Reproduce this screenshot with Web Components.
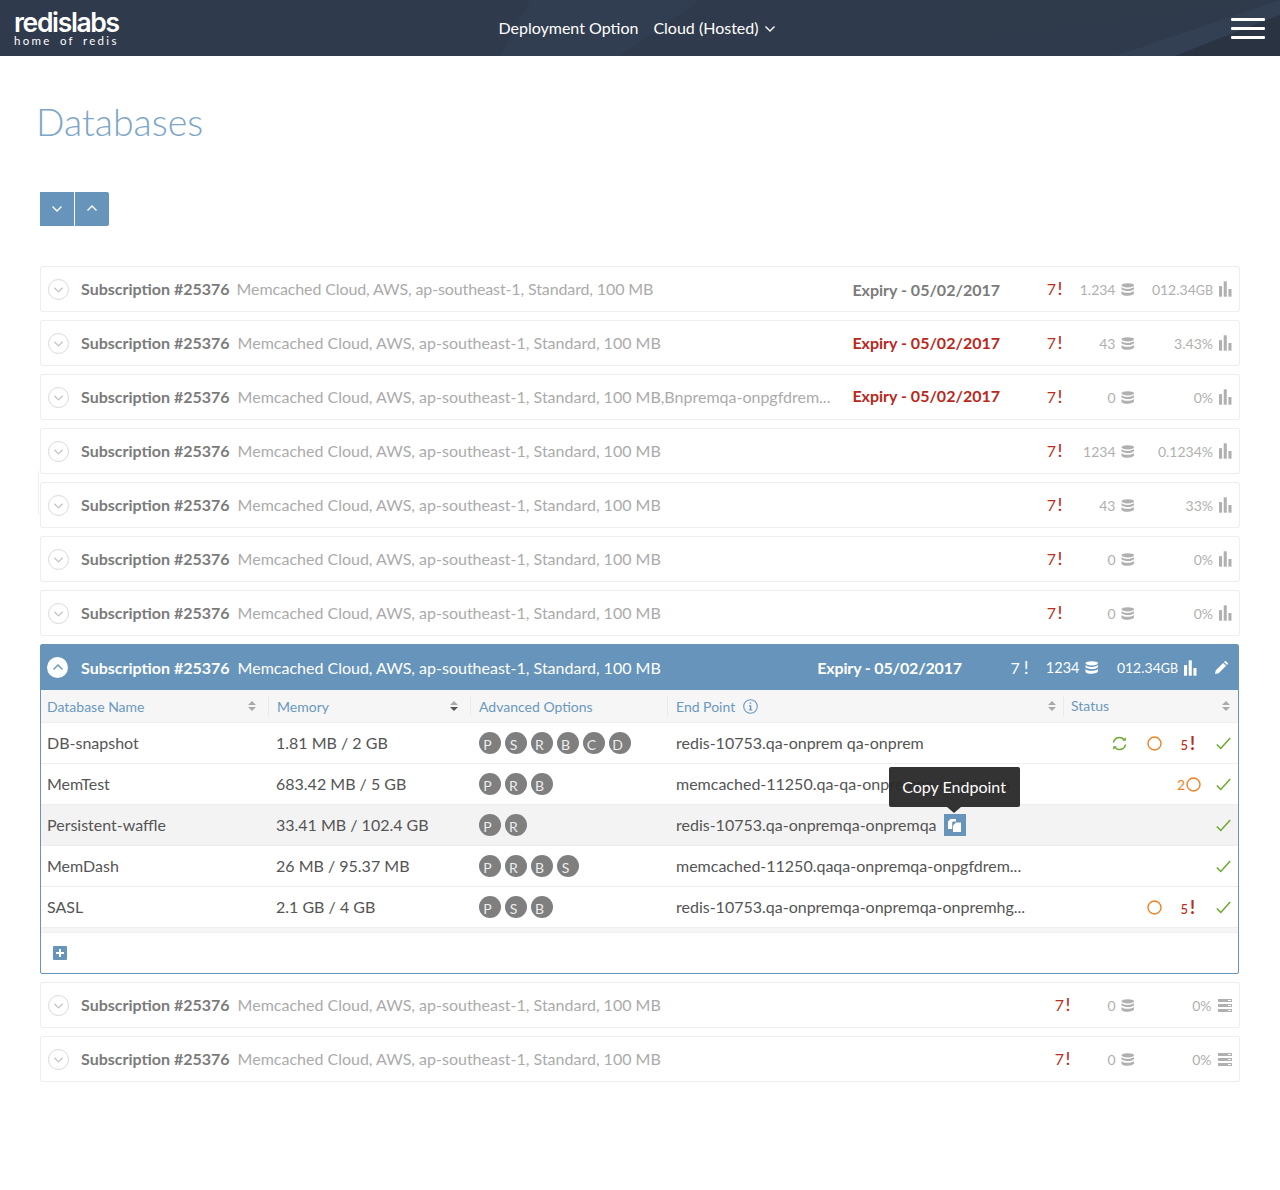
<!DOCTYPE html>
<html>
<head>
<meta charset="utf-8">
<title>Databases</title>
<style>
	html, body { margin: 0; background: #fff; font-family: "Lato", "Liberation Sans", sans-serif; }
	main { display: block; padding: 0 40px; }
	.list { display: flex; flex-direction: column; gap: 8px; }
</style>
</head>
<body>
<rl-header></rl-header>
<main>
	<rl-title>Databases</rl-title>
	<rl-toggle></rl-toggle>
	<div class="list">
		<rl-sub-row tight expiry="Expiry - 05/02/2017" count="1.234" usage="012.34GB"></rl-sub-row>
		<rl-sub-row expiry="Expiry - 05/02/2017" lift="-2" danger count="43" usage="3.43%"></rl-sub-row>
		<rl-sub-row expiry="Expiry - 05/02/2017" lift="-4" danger count="0" usage="0%" desc="Memcached Cloud, AWS, ap-southeast-1, Standard, 100 MB,Bnpremqa-onpgfdrem..."></rl-sub-row>
		<rl-sub-row count="1234" usage="0.1234%"></rl-sub-row>
		<rl-sub-row count="43" usage="33%" stray></rl-sub-row>
		<rl-sub-row count="0" usage="0%"></rl-sub-row>
		<rl-sub-row count="0" usage="0%"></rl-sub-row>
		<rl-sub-panel>
			<rl-db-row name="DB-snapshot" memory="1.81 MB / 2 GB" options="P S R B C D" endpoint="redis-10753.qa-onprem qa-onprem" status="sync circle alert"></rl-db-row>
			<rl-db-row name="MemTest" memory="683.42 MB / 5 GB" options="P R B" endpoint="memcached-11250.qa-qa-onpremqa-onpremqa" status="pending"></rl-db-row>
			<rl-db-row name="Persistent-waffle" memory="33.41 MB / 102.4 GB" options="P R" endpoint="redis-10753.qa-onpremqa-onpremqa" copy></rl-db-row>
			<rl-db-row name="MemDash" memory="26 MB / 95.37 MB" options="P R B S" endpoint="memcached-11250.qaqa-onpremqa-onpgfdrem..."></rl-db-row>
			<rl-db-row name="SASL" memory="2.1 GB / 4 GB" options="P S B" endpoint="redis-10753.qa-onpremqa-onpremqa-onpremhg..." status="circle alert"></rl-db-row>
		</rl-sub-panel>
		<rl-sub-row count="0" usage="0%" server></rl-sub-row>
		<rl-sub-row count="0" usage="0%" server></rl-sub-row>
	</div>
</main>

<script>
const DEFAULT_DESC = "Memcached Cloud, AWS, ap-southeast-1, Standard, 100 MB";

const icons = {
	chevronDown: `<svg width="12" height="8" viewBox="0 0 12 8"><path d="M1.5 1.5 6 6l4.5-4.5" fill="none" stroke="currentColor" stroke-width="1.4"/></svg>`,
	chevronUp: `<svg width="12" height="8" viewBox="0 0 12 8"><path d="M1.5 6.5 6 2l4.5 4.5" fill="none" stroke="currentColor" stroke-width="1.4"/></svg>`,
	db: `<svg width="14" height="13" viewBox="0 0 14 13" fill="currentColor"><ellipse cx="7" cy="2.2" rx="6.5" ry="2.2"/><path d="M.5 4c1 1.300 3.500 1.900 6.500 1.900S12.500 5.300 13.500 4v1.700C13.500 7 10.500 8 7 8S.5 7 .5 5.700zM.5 8c1 1.300 3.500 1.900 6.500 1.900s5.500-.6 6.500-1.900v2.600C13.500 11.900 10.500 13 7 13S.5 11.900.5 10.600z"/></svg>`,
	bars: `<svg width="12.500" height="16" viewBox="0 0 13 16" fill="currentColor"><rect x="0" y="5" width="3.200" height="11"/><rect x="4.900" y="0" width="3.200" height="16"/><rect x="9.800" y="8" width="3.200" height="8"/></svg>`,
	server: `<svg width="14" height="13" viewBox="0 0 14 13" fill="currentColor"><path fill-rule="evenodd" d="M0 0h14v3H0zM10 1v1h3V1zM0 5h14v3H0zM10 6v1h3V6zM0 10h14v3H0zM10 11v1h3v-1z"/></svg>`,
	pencil: `<svg width="13" height="13" viewBox="0 0 13 13" fill="currentColor"><path d="M0 13l.8-3.700L8.200 1.900l2.900 2.900-7.400 7.400zM9 1.100 10 .1c.2-.2.500-.2.700 0l2.200 2.200c.2.200.2.500 0 .7l-1 1z"/></svg>`,
	info: `<svg width="15" height="15" viewBox="0 0 15 15"><circle cx="7.500" cy="7.500" r="6.800" fill="none" stroke="currentColor" stroke-width="1.100"/><path d="M6.700 3.300h1.500v1.500H6.700zM6 6.300h2.300v4.200h1v1H5.800v-1h1V7.300H6z" fill="currentColor"/></svg>`,
	sync: `<svg width="15" height="15" viewBox="0 0 15 15" fill="none" stroke="#6aa82e" stroke-width="1.500"><path d="M1.500 6.500A6 6 0 0 1 12 3.600"/><path d="M13.500 8.500A6 6 0 0 1 3 11.400"/><path d="M13.800 1.200v3.600h-3.600z" fill="#6aa82e" stroke="none"/><path d="M1.200 13.800v-3.600h3.600z" fill="#6aa82e" stroke="none"/></svg>`,
	check: `<svg width="15" height="13" viewBox="0 0 15 13"><path d="M.8 7.500 4.800 11.500 14.200 1" fill="none" stroke="#6aa82e" stroke-width="1.500"/></svg>`,
	circle: `<svg width="15" height="15" viewBox="0 0 15 15"><circle cx="7.500" cy="7.500" r="6.500" fill="none" stroke="#f08124" stroke-width="1.400"/></svg>`,
	copy: `<svg width="13" height="13" viewBox="0 0 13 13" fill="#fff"><path d="M2.500 0H8V2.500H5L4.200 3.300V10H0V2.500z"/><path d="M8 3.500H13V13H5V6.500z"/></svg>`
};

const headerTemplate = document.createElement('template');
headerTemplate.innerHTML = /*html*/`
	<style>
		:host {
			display: grid;
			grid-template-columns: 1fr auto 1fr;
			align-items: center;
			position: relative;
			height: 56px;
			padding: 0 15px 0 14px;
			background-color: #2f3a4c;
			color: #fff;
			overflow: hidden;
		}
		.bg { position: absolute; inset: 0; width: 100%; height: 100%; }
		.logo, nav, .burger { position: relative; }
		.logo { display: flex; flex-direction: column; width: 110px; margin-top: -1px; }
		.brand { font: 600 26.500px/24px "Inter", "Lato", sans-serif; letter-spacing: -1.350px; margin-top: 1px; }
		.tag { font: 400 11.500px/13px "Lato", sans-serif; letter-spacing: 2.300px; word-spacing: 3px; white-space: nowrap; }
		nav { display: flex; align-items: center; font-size: 16px; line-height: 20px; margin-right: 5px; }
		nav span + span { margin-left: 15px; }
		nav svg { margin-left: 5px; margin-top: 2px; }
		.burger { justify-self: end; display: flex; flex-direction: column; gap: 6px; width: 34px; margin-top: 1px; }
		.burger i { display: block; height: 3px; background: #fff; border-radius: 1px; }
	</style>
	<svg class="bg" viewBox="0 0 1280 56" preserveAspectRatio="none">
		<polygon points="530,0 700,0 620,56 500,56" fill="#313d50"/>
		<polygon points="1280,0 1280,15 1175,56 1115,56" fill="#334053"/>
		<polygon points="1280,15 1280,56 1175,56" fill="#2a3341"/>
		<polygon points="960,0 1280,0 960,40" fill="#2f3b4b"/>
	</svg>
	<div class="logo">
		<span class="brand">redislabs</span>
		<span class="tag">home of redis</span>
	</div>
	<nav>
		<span>Deployment Option</span>
		<span>Cloud (Hosted)</span>
		${icons.chevronDown}
	</nav>
	<div class="burger"><i></i><i></i><i></i></div>
`;

class RlHeader extends HTMLElement {
	constructor() {
		super();
		this.attachShadow({mode: 'open'}).append(headerTemplate.content.cloneNode(true));
	}
}

const titleTemplate = document.createElement('template');
titleTemplate.innerHTML = /*html*/`
	<style>
		:host { display: block; margin-left: -4px; padding-top: 42px; height: 94px; }
		h1 { margin: 0; font: 300 37.500px/48px "Lato", sans-serif; color: #7ba5c9; }
	</style>
	<h1><slot></slot></h1>
`;

class RlTitle extends HTMLElement {
	constructor() {
		super();
		this.attachShadow({mode: 'open'}).append(titleTemplate.content.cloneNode(true));
	}
}

const toggleTemplate = document.createElement('template');
toggleTemplate.innerHTML = /*html*/`
	<style>
		:host { display: flex; gap: 1px; height: 34px; margin-bottom: 40px; }
		button {
			width: 34px;
			height: 34px;
			padding: 0;
			border: 0;
			display: flex;
			align-items: center;
			justify-content: center;
			background: #6694bb;
			color: #fff;
		}
		button:first-child { border-radius: 2px 0 0 2px; }
		button:last-child { border-radius: 0 2px 2px 0; padding-bottom: 3px; }
	</style>
	<button>${icons.chevronDown}</button>
	<button>${icons.chevronUp}</button>
`;

class RlToggle extends HTMLElement {
	constructor() {
		super();
		this.attachShadow({mode: 'open'}).append(toggleTemplate.content.cloneNode(true));
	}
}

const rowStyles = /*css*/`
	.chev {
		flex: none;
		width: 21px;
		height: 21px;
		box-sizing: border-box;
		border-radius: 50%;
		display: flex;
		align-items: center;
		justify-content: center;
	}
	.title { font-weight: 700; margin-left: 12px; white-space: nowrap; }
	.desc { margin-left: 8px; white-space: nowrap; }
	.expiry { margin-left: auto; font-weight: 700; white-space: nowrap; }
	.alert { color: #b93022; text-align: right; white-space: nowrap; margin-top: -2px; }
	.alert b { font-weight: 500; font-size: 18px; margin-left: 1.500px; margin-right: -.5px; }
	.count, .usage { display: flex; align-items: center; justify-content: flex-end; font-size: 14px; white-space: nowrap; }
	.count svg { margin-left: 5px; width: 13.500px; }
	.usage svg { margin-left: 6px; margin-right: .5px; }
	small { font-size: 12.500px; }
`;

const subRowTemplate = document.createElement('template');
subRowTemplate.innerHTML = /*html*/`
	<style>
		${rowStyles}
		:host {
			display: flex;
			align-items: center;
			position: relative;
			box-sizing: border-box;
			height: 46px;
			padding: 0 7px;
			border: 1px solid #eeeeee;
			border-radius: 2px;
			font-size: 16px;
			color: #ababab;
		}
		:host([tight]) .desc { letter-spacing: -.12px; margin-left: 7px; }
		:host([stray])::before {
			content: "";
			position: absolute;
			left: -3px;
			top: -12px;
			height: 44px;
			border-left: 1px solid #eeeeee;
		}
		.title, .desc { margin-top: -2px; }
		.chev { border: 1px solid #d9d9d9; color: #c4c4c4; }
		.chev svg { width: 11px; margin-top: 1px; }
		.title { color: #7b7b7b; }
		.expiry { color: #7b7b7b; }
		:host([danger]) .expiry { color: #b9281a; }
		.alert { width: 62px; flex: none; }
		.count { width: 72px; flex: none; color: #b0b0b0; }
		.usage { width: 98px; flex: none; color: #b0b0b0; }
		:host([server]) .alert { width: 70px; }
		:host([server]) .count { width: 64px; }
	</style>
	<span class="chev">${icons.chevronDown}</span>
	<span class="title">Subscription #25376</span>
	<span class="desc"></span>
	<span class="expiry"></span>
	<span class="alert">7<b>!</b></span>
	<span class="count"><span class="n"></span>${icons.db}</span>
	<span class="usage"><span class="u"></span><span class="ic"></span></span>
`;

class RlSubRow extends HTMLElement {
	constructor() {
		super();
		this.attachShadow({mode: 'open'}).append(subRowTemplate.content.cloneNode(true));
	}

	connectedCallback() {
		this.render();
	}

	render() {
		const root = this.shadowRoot;
		root.querySelector('.desc').textContent = this.getAttribute('desc') || DEFAULT_DESC;
		const expiry = root.querySelector('.expiry');
		expiry.textContent = this.getAttribute('expiry') || "";
		if (this.hasAttribute('lift')) expiry.style.marginTop = this.getAttribute('lift') + "px";
		root.querySelector('.n').textContent = this.getAttribute('count');
		root.querySelector('.u').innerHTML = this.getAttribute('usage').replace('GB', '<small>GB</small>');
		const ic = root.querySelector('.ic');
		ic.style.display = "flex";
		ic.innerHTML = this.hasAttribute('server') ? icons.server : icons.bars;
	}
}

const panelTemplate = document.createElement('template');
panelTemplate.innerHTML = /*html*/`
	<style>
		${rowStyles}
		:host {
			display: block;
			box-sizing: border-box;
			height: 330px;
			margin-right: 1px;
			border: 1px solid #6694bb;
			border-radius: 2px;
			font-size: 16px;
		}
		.head {
			display: flex;
			align-items: center;
			height: 45px;
			padding: 0 7px 0 6px;
			background: #6694bb;
			color: #fff;
		}
		.chev { background: #fff; color: #6694bb; }
		.chev svg { margin-bottom: 2px; }
		.title { margin-left: 13px; }
		.expiry { letter-spacing: -.15px; }
		.alert { width: 66px; flex: none; color: #fff; }
		.alert b { font-weight: 400; margin-left: 4px; }
		.count { width: 70px; flex: none; font-size: 14.500px; }
		.usage { width: 99px; flex: none; }
		.pen { display: flex; margin-left: 18px; margin-right: 3px; }
		.cols {
			display: grid;
			grid-template-columns: 221px 202px 197px 396px 1fr;
			height: 32px;
			padding-left: 6px;
			align-items: center;
			background: #f6f6f6;
			border-bottom: 1px solid #eeeeee;
			color: #6a98c0;
			font-size: 14px;
		}
		.cols > div { display: flex; align-items: center; height: 20px; padding-right: 8px; box-sizing: border-box; }
		.cols > div + div { border-left: 1px solid #eaeaea; padding-left: 8px; }
		.cols > div:nth-child(-n+2) { padding-right: 12px; }
		.cols > div:nth-child(4) { padding-right: 7px; }
		.cols > div:nth-child(5) { padding-left: 7px; }
		.raised { margin-top: -2px; }
		.sort { margin-left: auto; display: flex; flex-direction: column; gap: 2px; }
		.sort i { width: 0; height: 0; border-left: 4px solid transparent; border-right: 4px solid transparent; }
		.sort i:first-child { border-bottom: 4px solid #a9a9a9; }
		.sort i:last-child { border-top: 4px solid #a9a9a9; }
		.sort.on i:last-child { border-top-color: #555; }
		.cols .info { display: flex; margin-left: 8px; }
		.strip { height: 4px; background: #f6f6f6; border-bottom: 1px solid #eeeeee; }
		.foot { padding: 13px 12px; display: flex; }
		.plus {
			width: 14px;
			height: 14px;
			background: #6694bb;
			border-radius: 1px;
			display: flex;
			align-items: center;
			justify-content: center;
		}
	</style>
	<div class="head">
		<span class="chev">${icons.chevronUp}</span>
		<span class="title">Subscription #25376</span>
		<span class="desc">${DEFAULT_DESC}</span>
		<span class="expiry">Expiry - 05/02/2017</span>
		<span class="alert">7<b>!</b></span>
		<span class="count"><span>1234</span>${icons.db}</span>
		<span class="usage"><span>012.34<small>GB</small></span>${icons.bars}</span>
		<span class="pen">${icons.pencil}</span>
	</div>
	<div class="cols">
		<div>Database Name<span class="sort"><i></i><i></i></span></div>
		<div>Memory<span class="sort on"><i></i><i></i></span></div>
		<div>Advanced Options</div>
		<div>End Point<span class="info">${icons.info}</span><span class="sort"><i></i><i></i></span></div>
		<div><span class="raised">Status</span><span class="sort"><i></i><i></i></span></div>
	</div>
	<slot></slot>
	<div class="strip"></div>
	<div class="foot">
		<span class="plus"><svg width="8" height="8" viewBox="0 0 8 8"><path d="M3 0h2v3h3v2H5v3H3V5H0V3h3z" fill="#fff"/></svg></span>
	</div>
`;

class RlSubPanel extends HTMLElement {
	constructor() {
		super();
		this.attachShadow({mode: 'open'}).append(panelTemplate.content.cloneNode(true));
	}
}

const dbRowTemplate = document.createElement('template');
dbRowTemplate.innerHTML = /*html*/`
	<style>
		:host {
			display: grid;
			grid-template-columns: 229px 203px 197px 1fr auto;
			align-items: center;
			height: 41px;
			box-sizing: border-box;
			padding-left: 6px;
			border-bottom: 1px solid #eeeeee;
			font-size: 16px;
			color: #555;
		}
		:host([copy]) { background: #f3f3f3; }
		.name, .mem, .text { position: relative; top: -1px; }
		.opts { display: flex; gap: 4px; }
		.opt {
			width: 22px;
			height: 22px;
			border-radius: 50%;
			background: #7f7f7f;
			color: #ededed;
			font-size: 14px;
			line-height: 16px;
			display: flex;
			align-items: center;
			justify-content: center;
			padding-top: 4px;
			padding-right: 5px;
			box-sizing: border-box;
		}
		.end { display: flex; align-items: center; white-space: nowrap; }
		.copy { position: relative; margin-left: 7px; }
		.copy .btn {
			width: 22px;
			height: 22px;
			background: #6694bb;
			display: flex;
			align-items: center;
			justify-content: center;
		}
		.tip {
			position: absolute;
			left: -55px;
			bottom: 29px;
			width: 131px;
			height: 40px;
			line-height: 40px;
			text-align: center;
			background: rgba(40, 40, 40, .95);
			color: #fff;
			border-radius: 2px;
			font-size: 16px;
			z-index: 2;
		}
		.tip::after {
			content: "";
			position: absolute;
			left: 58px;
			bottom: -6px;
			border-left: 7px solid transparent;
			border-right: 7px solid transparent;
			border-top: 6px solid #333;
		}
		.status { display: grid; grid-template-columns: 35px 35px 36.500px 30px; align-items: center; justify-items: center; }
		.status > span { display: flex; align-items: center; }
		.status > span:nth-child(3) { justify-self: end; }
		.alert { color: #b93022; font-size: 13px; font-weight: 500; margin-right: 13px; }
		.alert b { font-size: 18px; font-weight: 700; margin-left: 2px; }
		.pending { display: flex; align-items: center; color: #f08124; font-size: 14px; margin-right: 7px; }
		.pending svg { margin-left: 1px; margin-top: 1px; }
	</style>
	<span class="name"></span>
	<span class="mem"></span>
	<span class="opts"></span>
	<span class="end"></span>
	<span class="status"></span>
`;

class RlDbRow extends HTMLElement {
	constructor() {
		super();
		this.attachShadow({mode: 'open'}).append(dbRowTemplate.content.cloneNode(true));
	}

	connectedCallback() {
		this.render();
	}

	render() {
		const root = this.shadowRoot;
		root.querySelector('.name').textContent = this.getAttribute('name');
		root.querySelector('.mem').textContent = this.getAttribute('memory');

		const opts = root.querySelector('.opts');
		this.getAttribute('options').split(' ').forEach(letter => {
			const opt = document.createElement('span');
			opt.setAttribute('class', 'opt');
			opt.textContent = letter;
			opts.appendChild(opt);
		});

		const end = root.querySelector('.end');
		end.innerHTML = `<span class="text">${this.getAttribute('endpoint')}</span>`;
		if (this.hasAttribute('copy')) {
			const copy = document.createElement('span');
			copy.setAttribute('class', 'copy');
			copy.innerHTML = `<span class="btn">${icons.copy}</span><span class="tip">Copy Endpoint</span>`;
			end.appendChild(copy);
		}

		// slots: sync, circle, alert, check
		const status = (this.getAttribute('status') || "").split(' ');
		const slots = [
			status.includes('sync') ? icons.sync : "",
			status.includes('circle') ? icons.circle : "",
			status.includes('alert') ? `<span class="alert">5<b>!</b></span>`
				: status.includes('pending') ? `<span class="pending">2${icons.circle}</span>` : "",
			icons.check
		];
		root.querySelector('.status').innerHTML = slots.map(s => `<span>${s}</span>`).join('');
	}
}

customElements.define("rl-header", RlHeader);
customElements.define("rl-title", RlTitle);
customElements.define("rl-toggle", RlToggle);
customElements.define("rl-sub-row", RlSubRow);
customElements.define("rl-sub-panel", RlSubPanel);
customElements.define("rl-db-row", RlDbRow);
</script>
</body>
</html>
